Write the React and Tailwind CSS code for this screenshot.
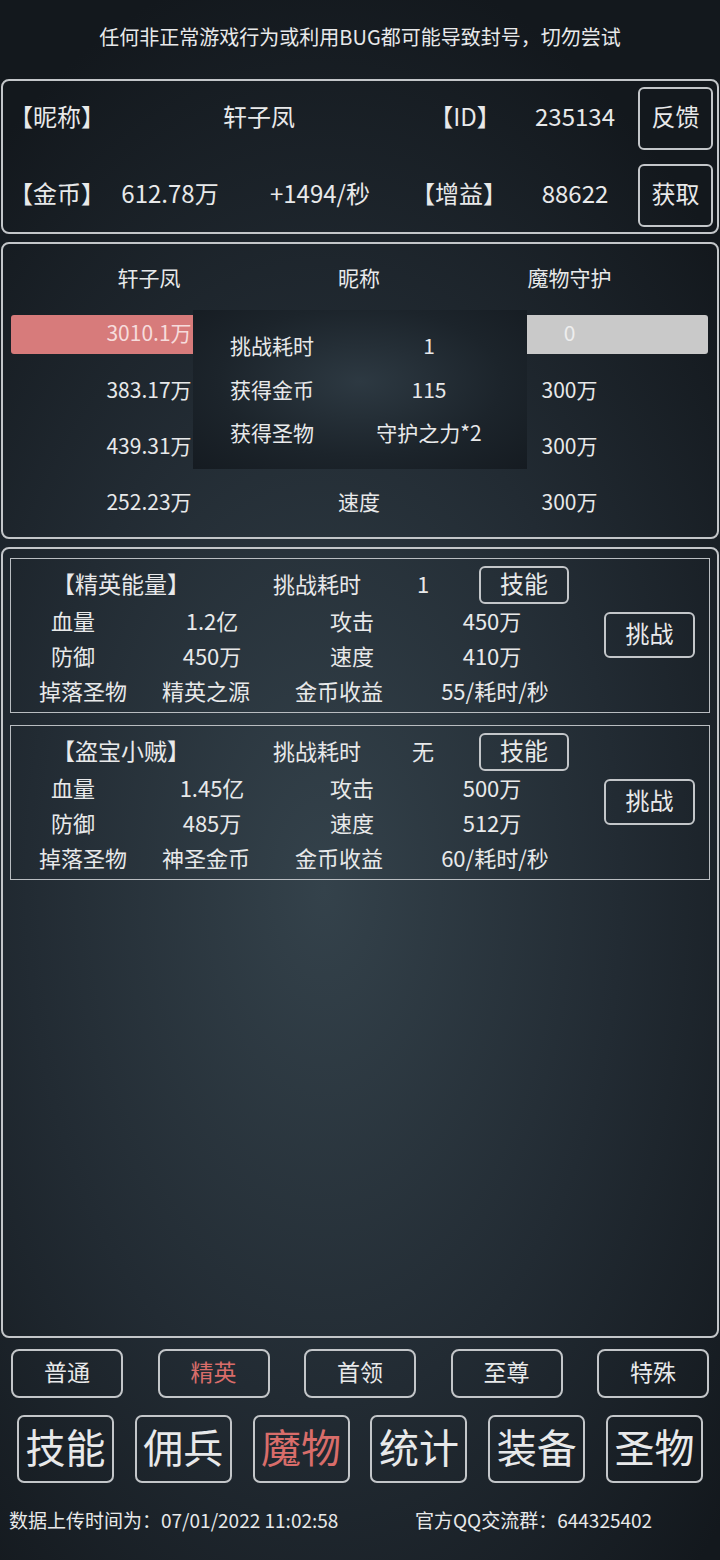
const Box = ({ className = "", children }) => (
  <div className={`flex items-center justify-center border-2 border-[#c3c6c9] rounded-[6px] pb-[4px] ${className}`}>{children}</div>
);

const monsters = [
  {
    name: "【精英能量】",
    time: "1",
    rows: [
      ["血量", "1.2亿", "攻击", "450万"],
      ["防御", "450万", "速度", "410万"],
      ["掉落圣物", "精英之源", "金币收益", "55/耗时/秒"],
    ],
  },
  {
    name: "【盗宝小贼】",
    time: "无",
    rows: [
      ["血量", "1.45亿", "攻击", "500万"],
      ["防御", "485万", "速度", "512万"],
      ["掉落圣物", "神圣金币", "金币收益", "60/耗时/秒"],
    ],
  },
];

// the last row of each card sits on its own column stops
const colW = [
  ["w-[124px]", "w-[154px]", "w-[126px]", "w-[154px]"],
  ["w-[124px]", "w-[154px]", "w-[126px]", "w-[154px]"],
  ["w-[144px]", "w-[102px]", "w-[164px]", "w-[148px]"],
];

function MonsterCard({ m }) {
  return (
    <div className="h-[155px] border-[1.5px] border-[#b9bdc1] flex flex-col">
      <div className="mt-[7px] h-[38px] flex items-center text-[22px]">
        <div className="w-[220px] text-center text-[23px] pb-[4px]">{m.name}</div>
        <div className="w-[172px] text-center pb-[4px]">挑战耗时</div>
        <div className="w-[40px] text-center pb-[4px]">{m.time}</div>
        <Box className="ml-[36px] w-[90px] h-[38px] text-[24px]">技能</Box>
      </div>
      <div className="flex">
        <div className="flex flex-col">
          {m.rows.map((r, i) => (
            <div key={i} className="h-[35px] flex items-center text-[22px] pb-[2px]">
              {r.map((c, j) => (
                <div key={j} className={`${colW[i][j]} text-center`}>
                  {c}
                </div>
              ))}
            </div>
          ))}
        </div>
        <div className="pt-[8px] pl-[35px]">
          <Box className="w-[91px] h-[46px] text-[24px]">挑战</Box>
        </div>
      </div>
    </div>
  );
}

export default function App() {
  return (
    <div className="w-[720px] h-[1560px] overflow-hidden text-[#e8e9ea] font-['Noto_Sans_CJK_SC',sans-serif] bg-[radial-gradient(ellipse_75%_60%_at_45%_57%,#34424b_0%,#222b33_55%,#13181d_100%)]">
      <div className="h-[79px] pb-[6px] flex items-center justify-center text-[20px]">
        任何非正常游戏行为或利用BUG都可能导致封号，切勿尝试
      </div>

      {/* player info */}
      <div className="mx-[1px] h-[155px] border-2 border-[#c3c6c9] rounded-[8px] flex flex-col justify-center gap-[15px] text-[24px]">
        <div className="flex items-center h-[62px]">
          <div className="w-[100px] pl-[6px] pb-[5px]">【昵称】</div>
          <div className="w-[312px] text-center pb-[5px]">轩子凤</div>
          <div className="w-[100px] text-center pb-[5px]">【ID】</div>
          <div className="w-[120px] text-center pb-[5px]">235134</div>
          <Box className="ml-[3px] w-[75px] h-[63px]">反馈</Box>
        </div>
        <div className="flex items-center h-[62px]">
          <div className="w-[100px] pl-[6px] pb-[4px]">【金币】</div>
          <div className="w-[134px] text-center pb-[4px]">612.78万</div>
          <div className="w-[166px] text-center pb-[4px]">+1494/秒</div>
          <div className="w-[112px] text-center pb-[4px]">【增益】</div>
          <div className="w-[120px] text-center pb-[4px]">88622</div>
          <Box className="ml-[3px] w-[75px] h-[63px]">获取</Box>
        </div>
      </div>

      {/* battle panel */}
      <div className="relative mx-[1px] mt-[8px] h-[297px] border-2 border-[#c3c6c9] rounded-[8px] pt-[6px] px-[8px] text-[21px]">
        <div className="grid grid-cols-[276px_144px_277px] auto-rows-[56px] items-center text-center">
          <div>轩子凤</div>
          <div>昵称</div>
          <div>魔物守护</div>
          <div className="h-[39px] rounded-[3px] bg-[#d77b7b] text-[#f6dcdc] flex items-center justify-center pb-[3px]">3010.1万</div>
          <div>血量</div>
          <div className="h-[39px] rounded-[3px] bg-[#c9c9c9] text-[#eeeeee] flex items-center justify-center pb-[3px]">0</div>
          <div>383.17万</div>
          <div>攻击</div>
          <div>300万</div>
          <div>439.31万</div>
          <div>防御</div>
          <div>300万</div>
          <div>252.23万</div>
          <div>速度</div>
          <div>300万</div>
        </div>

        {/* result popup */}
        <div className="absolute left-[190px] top-[66px] w-[334px] h-[159px] pt-[14px] bg-[radial-gradient(ellipse_at_50%_45%,#2d3942_0%,#1c242b_60%,#151b21_100%)]">
          {[
            ["挑战耗时", "1"],
            ["获得金币", "115"],
            ["获得圣物", "守护之力*2"],
          ].map(([k, v]) => (
            <div key={k} className="h-[43.5px] flex items-center">
              <div className="pl-[37px] w-[170px]">{k}</div>
              <div className="w-[132px] text-center">{v}</div>
            </div>
          ))}
        </div>
      </div>

      {/* monster list */}
      <div className="mx-[1px] mt-[8px] h-[791px] border-2 border-[#c3c6c9] rounded-[8px] pt-[9px] px-[7px] flex flex-col gap-[12px]">
        {monsters.map((m) => (
          <MonsterCard key={m.name} m={m} />
        ))}
      </div>

      {/* category tabs */}
      <div className="mt-[11px] px-[11px] flex justify-between text-[23px]">
        {["普通", "精英", "首领", "至尊", "特殊"].map((t) => (
          <Box key={t} className={`w-[112px] h-[49px] rounded-[8px] ${t === "精英" ? "text-[#d96d6a]" : ""}`}>
            {t}
          </Box>
        ))}
      </div>

      {/* main nav */}
      <div className="mt-[17px] px-[17px] flex justify-between text-[40px]">
        {["技能", "佣兵", "魔物", "统计", "装备", "圣物"].map((t) => (
          <Box key={t} className={`w-[97px] h-[68px] rounded-[7px] pb-[6px] ${t === "魔物" ? "text-[#d96d6a]" : ""}`}>
            {t}
          </Box>
        ))}
      </div>

      <div className="mt-[23px] px-[9px] flex text-[19px]">
        <div className="w-[406px]">数据上传时间为：07/01/2022 11:02:58</div>
        <div>官方QQ交流群：644325402</div>
      </div>
    </div>
  );
}
